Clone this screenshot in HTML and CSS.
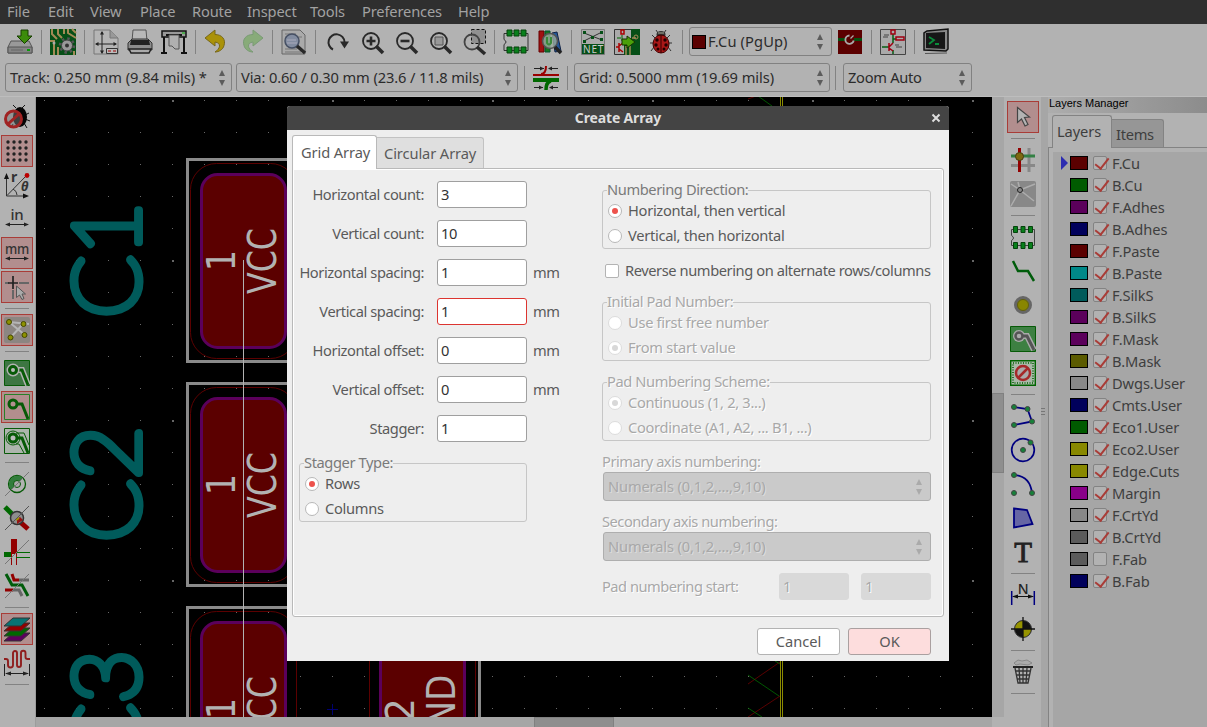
FILE: index.html
```html
<!DOCTYPE html>
<html lang="en">
<head>
<meta charset="utf-8">
<title>Create Array</title>
<link rel="stylesheet" href="styles.css">
</head>
<body>
<nav class="menubar"><span class="m1">File</span><span class="m2">Edit</span><span class="m3">View</span><span class="m4">Place</span><span class="m5">Route</span><span class="m6">Inspect</span><span class="m7">Tools</span><span class="m8">Preferences</span><span class="m9">Help</span></nav>

<div class="toolbar main-tools">
  <div class="btn"><svg viewBox="0 0 26 26"><path d="M4 12h18l3 6v6H1v-6z" fill="#999" stroke="#555"/><path d="M1 18h24v6H1z" fill="#858585" stroke="#555"/><path d="M4 21h12" stroke="#666"/><path d="M20 20h3v2h-3z" fill="#0a9a0a"/><path d="M14 1h7v6h4l-7.500 7.500L10 7h4z" fill="#3c8c0b" stroke="#163c00"/></svg></div>
  <i class="sep"></i>
  <div class="btn"><svg viewBox="0 0 26 26"><path d="M0 0h26v26H0z" fill="#064f17"/><path d="M2 0v5l5 5M8 0v5l4 4M14 0v5M0 12h4v14M8 26v-8M18 0v4l8 5M22 0l4 4M24 22v4" stroke="#a38a55" stroke-width="2" fill="none"/><circle cx="4" cy="14" r="1.500" fill="#aaa"/><circle cx="17" cy="16.500" r="5.500" fill="#999" stroke="#444"/><circle cx="17" cy="16.500" r="7" fill="none" stroke="#555" stroke-width="2.500" stroke-dasharray="2.500 3"/><circle cx="17" cy="16.500" r="2" fill="#333"/></svg></div>
  <i class="sep"></i>
  <div class="btn"><svg viewBox="0 0 26 26"><path d="M1 1h16l8 8v16H1z" fill="#b5b5b5" stroke="#777"/><path d="M17 1v8h8" fill="#999" stroke="#777"/><path d="M9 3v21M3 15h20" stroke="#222"/><path d="M9 2l2 3.500H7zM9 25l2-3.500H7zM2 15l3.500-2v4zM24 15l-3.500-2v4z" fill="#222"/><path d="M13.500 19.500h11v5h-11z" fill="#bbb" stroke="#333"/><path d="M15 22h3m2 0h3" stroke="#900"/></svg></div>
  <div class="btn"><svg viewBox="0 0 26 26"><path d="M6 1h13l1 11H5z" fill="#b8b8b8" stroke="#555"/><path d="M1 14l4-4h16l4 4v7H1z" fill="#8c8c8c" stroke="#333"/><path d="M4 11h18l1 5H3z" fill="#222"/><path d="M2 20h22l-2 4H4z" fill="#aaa" stroke="#222" stroke-width="1.500"/></svg></div>
  <div class="btn"><svg viewBox="0 0 26 26"><path d="M1 2h24v6H1z" fill="#999" stroke="#111" stroke-width="1.500"/><path d="M5 6h16" stroke="#111" stroke-width="2"/><path d="M3 8v16M23 8v16M0 24h6m14 0h6" stroke="#111" stroke-width="2"/><path d="M8 6h10v14h-4l-3-3H8z" fill="#b0b0b0" stroke="#555"/><path d="M21 4h3" stroke="#0b0"/></svg></div>
  <i class="sep"></i>
  <div class="btn"><svg viewBox="0 0 26 26"><path d="M1 9l10-8v4.500c7 0 11 5 9 11-1 4-5 6.500-9 6.500 5-3 7-9 0-10v4z" fill="#aa9209" stroke="#776719"/></svg></div>
  <div class="btn faded"><svg viewBox="0 0 26 26"><path d="M25 9L15 1v4.500C8 5.500 4 10.500 6 16.500c1 4 5 6.500 9 6.500-5-3-7-9 0-10v4z" fill="#72a85c" stroke="#5c8e55"/></svg></div>
  <i class="sep"></i>
  <div class="btn"><svg viewBox="0 0 26 26"><path d="M1 1h18l5 5v19H1z" fill="#aaa" stroke="#666"/><path d="M4 5h11M4 8h17M4 20h12M4 23h16" stroke="#777"/><circle cx="11" cy="12" r="7" fill="#828ca0" stroke="#465064" stroke-width="1.500"/><path d="M6 11h9M6 14h10" stroke="#aab"/><path d="M16 17l8 7" stroke="#292929" stroke-width="3.500"/></svg></div>
  <i class="sep"></i>
  <div class="btn"><svg viewBox="0 0 26 26"><path d="M9 20.500A8 8 0 1 1 20.500 13" fill="none" stroke="#292929" stroke-width="2"/><path d="M16 12.500h9l-4.500 7z" fill="#292929"/></svg></div>
  <div class="btn"><svg viewBox="0 0 26 26"><circle cx="13" cy="12" r="8" fill="none" stroke="#292929" stroke-width="1.800"/><path d="M18 17l7 7" stroke="#292929" stroke-width="3.500"/><path d="M8.500 12h9M13 7.500v9" stroke="#292929" stroke-width="2.600"/></svg></div>
  <div class="btn"><svg viewBox="0 0 26 26"><circle cx="13" cy="12" r="8" fill="none" stroke="#292929" stroke-width="1.800"/><path d="M18 17l7 7" stroke="#292929" stroke-width="3.500"/><path d="M8.500 12h9" stroke="#292929" stroke-width="2.600"/></svg></div>
  <div class="btn"><svg viewBox="0 0 26 26"><circle cx="13" cy="12" r="8" fill="none" stroke="#292929" stroke-width="1.800"/><path d="M18 17l7 7" stroke="#292929" stroke-width="3.500"/><path d="M9 8h8v8H9z" fill="#999" stroke="#555"/></svg></div>
  <div class="btn"><svg viewBox="0 0 26 26"><path d="M11.500 .5h14v14h-14z" fill="#909090" stroke="#111" stroke-dasharray="3 2"/><circle cx="12" cy="13" r="7.500" fill="none" stroke="#444" stroke-width="1.800"/><path d="M17 18l8 7" stroke="#292929" stroke-width="3.500"/></svg></div>
  <i class="sep"></i>
  <div class="btn"><svg viewBox="0 0 26 26"><path d="M1 4.500h24v17H1v-6q4-2.500 0-5z" fill="none" stroke="#333"/><path d="M4 1h5v6H4zM11 1h5v6h-5zM18 1h5v6h-5zM4 18h5v6H4zM11 18h5v6h-5zM18 18h5v6h-5z" fill="#08801b" stroke="#06430c"/></svg></div>
  <div class="btn"><svg viewBox="0 0 26 26"><path d="M2 2h5v21H2z" fill="#a01212" stroke="#600"/><path d="M8 2h5v21H8z" fill="#17751e" stroke="#053"/><path d="M15 4l5-1 4 19-6 1z" fill="#255899" stroke="#124"/><circle cx="13" cy="12" r="7.500" fill="#9bab9c" fill-opacity=".8" stroke="#555" stroke-width="1.500"/><path d="M10 8v6q2 3 4 0V8" fill="none" stroke="#3a8a3a" stroke-width="2"/><path d="M18 18l6 6" stroke="#222" stroke-width="3.500"/></svg></div>
  <i class="sep"></i>
  <div class="btn"><svg viewBox="0 0 26 26"><path d="M1.500 .5h23v25h-23z" fill="#aaa" stroke="#777"/><path d="M4 4l18 7M4 12l18-9" stroke="#333"/><path d="M3 2h3v3H3zM20 2h3v3h-3zM3 11h3v3H3zM20 9h3v3h-3zM11 7h3v3h-3z" fill="#064f17"/><path d="M2 15h22v10H2z" fill="#064f17"/><text x="13" y="23.500" font-family="Noto Sans" font-size="10" textLength="20" text-anchor="middle" fill="#ccc">NET</text></svg></div>
  <div class="btn"><svg viewBox="0 0 26 26"><path d="M.5.500h18v25H.5z" fill="#aaa" stroke="#333"/><path d="M17 0h9v26H10V15h7z" fill="#064f17"/><path d="M12 17v9M16 17v9M18 9h4" stroke="#a38a55" stroke-width="1.500"/><circle cx="22" cy="8" r="2" fill="none" stroke="#a38a55"/><path d="M7 1h3v4H7zM2 18h3m0-4v9m0-6l4-3m-4 6l4 3" fill="none" stroke="#a00" stroke-width="1.500"/><path d="M3 9h4m1-3v6" stroke="#060"/><path d="M8 10h5V7l8 6-8 6v-3H8z" fill="#4aa00a" stroke="#173400"/></svg></div>
  <div class="btn"><svg viewBox="0 0 26 26"><path d="M7 9L4 6M6 14H2m4 4l-3 4m16-13l3-3m-2 8h4m-4 4l3 4M10 4L8 1m8 3l2-3" stroke="#333"/><ellipse cx="13" cy="5.500" rx="4.500" ry="3.500" fill="#333"/><path d="M10 4h6" stroke="#aa9" /><ellipse cx="13" cy="15" rx="8" ry="9" fill="#a91717" stroke="#400"/><path d="M13 6v18" stroke="#300"/><g fill="#200"><circle cx="9" cy="11" r="1.700"/><circle cx="17" cy="11" r="1.700"/><circle cx="8" cy="16" r="1.700"/><circle cx="18" cy="16" r="1.700"/><circle cx="10" cy="20" r="1.500"/><circle cx="16" cy="20" r="1.500"/></g></svg></div>
  <i class="sep"></i>
  <div class="combo layer"><b class="swatch c-red"></b><span>F.Cu (PgUp)</span><em></em></div>
  <div class="btn"><svg viewBox="0 0 26 26"><path d="M1 1h24v24H1z" fill="#5b0000"/><path d="M1 10.500h7m9 0h8" stroke="#064f10" stroke-width="3"/><path d="M12.500 6.500a4.200 4.200 0 1 0 4.200 5" fill="none" stroke="#aaa" stroke-width="1.800"/><path d="M13.500 9.500l3-3" stroke="#aaa" stroke-width="1.200"/></svg></div>
  <i class="sep"></i>
  <div class="btn"><svg viewBox="0 0 26 26"><path d="M.5.500h25v25H.5z" fill="#aaa" stroke="#444"/><path d="M13 5v9M13 10h3M2 18h7M13 21v4" stroke="#075d15" stroke-width="1.500"/><path d="M11 1h4v4h-4zM16 8h8v3h-8zM9 14v8m0-4l4-4m-4 5l4 3" fill="none" stroke="#a00012" stroke-width="1.500"/><path d="M4 6h5M3 8h5m7 8h4m-3 2h6" stroke="#444"/></svg></div>
  <i class="sep"></i>
  <div class="btn"><svg viewBox="0 0 26 26"><path d="M4 2l21-2v20l-2 2-22-1V4z" fill="#888" stroke="#111" stroke-width="1.500"/><path d="M3 4l19-1v17L3 19z" fill="#161616"/><path d="M6 8l5 3-5 4M12 15h4" stroke="#0a8b3a" stroke-width="1.800" fill="none"/><path d="M2 24.500l22-.5" stroke="#555"/></svg></div>
</div>

<div class="toolbar option-tools">
  <div class="combo track"><span>Track: 0.250 mm (9.84 mils) *</span><em></em></div>
  <div class="combo via"><span>Via: 0.60 / 0.30 mm (23.6 / 11.8 mils)</span><em></em></div>
  <i class="sep"></i>
  <div class="btn"><svg viewBox="0 0 26 26"><path d="M0 10h26" stroke="#9b0000" stroke-width="2"/><path d="M8 9q5 0 5-8" fill="none" stroke="#9b0000" stroke-width="2"/><path d="M0 15h26" stroke="#006800" stroke-width="4"/><path d="M18 16q-5 1-5 9" fill="none" stroke="#006800" stroke-width="3.500"/><path d="M1 3.500h10M16 3.500h9M1 22.500h9M17 22.500h8" stroke="#222"/><path d="M11 3.500L7 1.500v4zM15 3.500l4-2v4zM10 22.500l-4-2v4zM16 22.500l4-2v4z" fill="#222"/></svg></div>
  <i class="sep"></i>
  <div class="combo grid"><span>Grid: 0.5000 mm (19.69 mils)</span><em></em></div>
  <i class="sep"></i>
  <div class="combo zoom"><span>Zoom Auto</span><em></em></div>
</div>

<main class="work">
  <aside class="side left">
    <div class="btn"><svg viewBox="0 0 26 26"><path d="M12 4L9 1m9 3l3-3m0 10l4-2m-4 6l5 2m-6 2l3 5M9 20l-2 4" stroke="#111"/><ellipse cx="16" cy="13" rx="7" ry="10" fill="#050505"/><circle cx="9.500" cy="15" r="8" fill="#777" fill-opacity=".5" stroke="#a02323" stroke-width="3"/><path d="M4 20L15 10" stroke="#a02323" stroke-width="3"/></svg></div>
    <div class="btn on"><svg viewBox="0 0 26 26"><path d="M4 4h.01M10 4h.01M16 4h.01M22 4h.01M4 10h.01M10 10h.01M16 10h.01M22 10h.01M4 16h.01M10 16h.01M16 16h.01M22 16h.01M4 22h.01M10 22h.01M16 22h.01M22 22h.01" stroke="#222" stroke-width="3.400" stroke-linecap="round"/></svg></div>
    <div class="btn"><svg viewBox="0 0 26 26"><path d="M2.500 3v21H23M3 23.500L22 4M9 17q4 2 4 6" fill="none" stroke="#333"/><path d="M2.500 1l2.500 6H0zM25 24l-6-2.500v5z" fill="#111"/><circle cx="23" cy="3.500" r="2.400" fill="#b00"/><text x="7" y="10" font-family="Noto Sans" font-weight="bold" font-size="14" fill="#333">r</text><text x="17" y="19" font-family="Noto Sans" font-weight="bold" font-style="italic" font-size="13" fill="#333">θ</text></svg></div>
    <div class="btn"><svg viewBox="0 0 26 26"><text x="13" y="13.500" text-anchor="middle" font-family="Noto Sans" font-weight="500" font-size="15" fill="#333">in</text><path d="M2 18.500h22" stroke="#222"/><path d="M1 18.500l5-2v4zM25 18.500l-5-2v4z" fill="#222"/></svg></div>
    <div class="btn on"><svg viewBox="0 0 26 26"><text x="13" y="14" text-anchor="middle" font-family="Noto Sans" font-weight="500" font-size="15" textLength="24" lengthAdjust="spacingAndGlyphs" fill="#333">mm</text><path d="M2 18.500h22" stroke="#222"/><path d="M1 18.500l5-2v4zM25 18.500l-5-2v4z" fill="#222"/></svg></div>
    <div class="btn on"><svg viewBox="0 0 26 26"><path d="M1 9h4M15 9h10M9 16v9" stroke="#666" stroke-width="2"/><path d="M9 2v13M4 9h10" stroke="#222" stroke-width="1.700"/><path d="M12.500 12v11.500l3-2.500 2.500 4.500 2-1-2-4.500h3.500z" fill="#aaa" stroke="#555"/></svg></div>
    <i class="sep"></i>
    <div class="btn on"><svg viewBox="0 0 26 26"><rect width="26" height="26" rx="2" fill="#8c8682"/><path d="M5 5l20 2M5 5l16 13M19 7L7 20" stroke="#b5b5b5" stroke-width="2"/><g fill="#8d9200" stroke="#454700"><circle cx="5" cy="5" r="2.500"/><circle cx="19.500" cy="7" r="2.500"/><circle cx="20.500" cy="18" r="2.500"/><circle cx="6.500" cy="20.500" r="2.500"/></g></svg></div>
    <i class="sep"></i>
    <div class="btn clip"><svg viewBox="0 0 26 26"><path d="M.5.500h25v25H.5z" fill="#3d7642" stroke="#075a07"/><path d="M9 10h9l6 15" stroke="#b2b2b2" stroke-width="6" fill="none"/><path d="M9 10h9l6 15" stroke="#075a07" stroke-width="3" fill="none"/><circle cx="9" cy="10" r="5" fill="#bbb" stroke="#b2b2b2" stroke-width="3"/><circle cx="9" cy="10" r="3.500" fill="#bbb" stroke="#075a07" stroke-width="3"/></svg></div>
    <div class="btn on"><svg viewBox="0 0 26 26"><path d="M.5.500h25v25H.5z" fill="none" stroke="#278027"/><path d="M9 10h9l6 15" stroke="#075a07" stroke-width="3" fill="none"/><circle cx="9" cy="10" r="4" fill="#b49090" stroke="#075a07" stroke-width="3"/></svg></div>
    <div class="btn"><svg viewBox="0 0 26 26"><path d="M.5.500h25v25H.5z" fill="#adb5ad" stroke="#075a07"/><circle cx="9" cy="10" r="7" fill="none" stroke="#075a07"/><path d="M12 5h8l5 12M12 16h3l5 9" stroke="#075a07" fill="none"/><path d="M9 10h9l6 15" stroke="#075a07" stroke-width="3" fill="none"/><circle cx="9" cy="10" r="4" fill="#bbb" stroke="#075a07" stroke-width="3"/></svg></div>
    <i class="sep"></i>
    <div class="btn"><svg viewBox="0 0 26 26"><circle cx="13" cy="13" r="8.500" fill="#b2b2b2" stroke="#075a07" stroke-width="1.300"/><path d="M7 19A8.500 8.500 0 0 1 19 7z" fill="#317c3b"/><circle cx="13" cy="13" r="3.500" fill="#aaa" stroke="#075a07"/><path d="M1 25L25 1" stroke="#777"/></svg></div>
    <div class="btn"><svg viewBox="0 0 26 26"><path d="M1 2l9 9" stroke="#006800" stroke-width="5"/><path d="M15 16l9 8" stroke="#930000" stroke-width="5"/><circle cx="13" cy="13" r="6.500" fill="#8d8d8d" stroke="#333" stroke-width="1.500"/><path d="M13 19v-5l3-2 3 3z" fill="#941313"/><path d="M12 15l3-2" stroke="#a39500" stroke-width="2"/><path d="M1 25L25 1" stroke="#555"/></svg></div>
    <div class="btn"><svg viewBox="0 0 26 26"><path d="M0 15.500h8" stroke="#006800" stroke-width="5"/><path d="M10 0v15" stroke="#930000" stroke-width="6"/><path d="M7.500 15v11M12.500 15v11" stroke="#930000"/><path d="M12 13.500h14M12 18.500h14" stroke="#006800"/><path d="M1 25L25 1" stroke="#777"/></svg></div>
    <div class="btn"><svg viewBox="0 0 26 26" fill="none" stroke-width="3"><path d="M8 1l2 6h5" stroke="#930000"/><path d="M15 7h10" stroke="#666"/><path d="M1 17h8" stroke="#930000"/><path d="M9 17h6l3 6" stroke="#666"/><path d="M2 1l6 11h10l6 11" stroke="#005c0b"/><path d="M1 25L25 1" stroke="#777" stroke-width="1"/></svg></div>
    <i class="sep"></i>
    <div class="btn on"><svg viewBox="0 0 26 26" stroke="#333"><path d="M9 17h17l-9 8H0z" fill="#5d005d"/><path d="M9 12h17l-9 8H0z" fill="#006800"/><path d="M9 7h17l-9 8H0z" fill="#930000"/><path d="M9 2h17l-9 8H0z" fill="#087373"/></svg></div>
    <div class="btn"><svg viewBox="0 0 26 26"><path d="M0 9h2q2 0 2 2v4a2.500 2.500 0 0 0 5 0V3a2 2 0 0 1 4 0v12a2 2 0 0 0 4 0V3a2.200 2.200 0 0 1 4.500 0v4q0 2 2 2H26" fill="none" stroke="#8f1e1e" stroke-width="1.900"/><path d="M.5 14v12m25-12v12M2 23.500h22" stroke="#222"/><path d="M1 23.500l6-2v4zM25 23.500l-6-2v4z" fill="#222"/></svg></div>
    <i class="sep"></i>
  </aside>

  <div class="canvas-col">
  <svg class="board" viewBox="36 97 956 620">
    <defs>
      <pattern id="dots" x="44" y="100" width="32" height="32" patternUnits="userSpaceOnUse"><path d="M0 0h1v1H0z" fill="#686868"/></pattern>
      <pattern id="major" x="172" y="100" width="160" height="160" patternUnits="userSpaceOnUse"><path d="M0 0h2v2H0z" fill="#666"/></pattern>
      <g id="pad"><rect x="201.500" y="174.500" width="84" height="173" rx="16" fill="#5b0000" stroke="#5b005b" stroke-width="3"/><rect x="190.500" y="163.500" width="106" height="195" rx="26" fill="none" stroke="#5b0000"/></g>
      <g id="part"><rect x="187.500" y="159.500" width="292" height="202" fill="none" stroke="#8a8a8a" stroke-width="3"/><use href="#pad"/><use href="#pad" x="179"/>
        <g class="padtext"><text transform="translate(235 271) rotate(-90)" textLength="21" lengthAdjust="spacingAndGlyphs">1</text><text transform="translate(276 294) rotate(-90)" textLength="66" lengthAdjust="spacingAndGlyphs">VCC</text><text transform="translate(414 274) rotate(-90)" textLength="24" lengthAdjust="spacingAndGlyphs">2</text><text transform="translate(455 304) rotate(-90)" textLength="77" lengthAdjust="spacingAndGlyphs">GND</text></g></g>
    </defs>
    <path d="M36 97h956v620H36z"/>
    <path d="M36 97h956v620H36z" fill="url(#dots)"/>
    <path d="M36 97h956v620H36z" fill="url(#major)"/>
    <g class="reftext"><text transform="translate(138.500 318) rotate(-90)" textLength="116" lengthAdjust="spacingAndGlyphs">C1</text><text transform="translate(138.500 542) rotate(-90)" textLength="116" lengthAdjust="spacingAndGlyphs">C2</text><text transform="translate(138.500 766) rotate(-90)" textLength="116" lengthAdjust="spacingAndGlyphs">C3</text></g>
    <use href="#part"/><use href="#part" y="224"/><use href="#part" y="448"/>
    <path d="M243.500 260v457" stroke="#b2b2b2"/>
    <path d="M332.500 704v11M327 709.500h11" stroke="#000070"/>
    <path d="M780.500 97v620M782.500 97v620" stroke="#8b8b00"/>
    <path d="M748 684l32-22M748 717l32-21M748 99l8-3" stroke="#700000" stroke-width=".8"/>
    <path d="M748 675l31 21M748 708l14 9M758 96l14 10M775 661l5 3" stroke="#006c00" stroke-width=".8"/>
  </svg>
  <div class="hscroll"><b></b></div>
  </div>
  <div class="vscroll"><b></b></div>

  <aside class="side right">
    <div class="btn on"><svg viewBox="0 0 26 26"><path d="M7.500 3.500v15l4-3.500 3.500 7 3-1.500-3.500-7 5-.5z" fill="#b3b3b3" stroke="#444" stroke-width="1.200"/></svg></div>
    <i class="sep"></i>
    <div class="btn"><svg viewBox="0 0 26 26"><path d="M1 18.500h24M19 1v24" stroke="#888" stroke-width="3"/><path d="M1 9h24" stroke="#338044" stroke-width="3"/><path d="M9.500 1v24" stroke="#930000" stroke-width="3"/><circle cx="9.500" cy="9.500" r="4" fill="#7d6810" stroke="#493c10"/></svg></div>
    <div class="btn"><svg viewBox="0 0 26 26"><rect width="26" height="26" rx="2" fill="#888"/><path d="M10 9L1 3M10 9l-2-8M10 9l15-6M10 9l14 11M10 9L1 25" stroke="#adadad" stroke-width="1.500"/><circle cx="10" cy="9" r="2.500" fill="#888" stroke="#222"/></svg></div>
    <i class="sep"></i>
    <div class="btn"><svg viewBox="0 0 26 26"><path d="M1.500 5.500h23v16h-23v-5q4-2.500 0-5z" fill="none" stroke="#444"/><path d="M3.500 2.500h4v6h-4zM11 2.500h4v6h-4zM18.500 2.500h4v6h-4zM3.500 18.500h4v6h-4zM11 18.500h4v6h-4zM18.500 18.500h4v6h-4z" fill="#08801b" stroke="#06430c"/></svg></div>
    <div class="btn"><svg viewBox="0 0 26 26"><path d="M3 3l5 10h10l6 10" fill="none" stroke="#005c0b" stroke-width="2.500"/></svg></div>
    <div class="btn"><svg viewBox="0 0 26 26"><circle cx="13" cy="13" r="7.500" fill="#898600" stroke="#666" stroke-width="3"/><circle cx="13" cy="13" r="5.500" fill="none" stroke="#4d4c1c" stroke-width=".7"/></svg></div>
    <div class="btn clip"><svg viewBox="0 0 26 26"><path d="M.5.500h25v25H.5z" fill="#3d8042" stroke="#075a07"/><path d="M9 10h8l7 14" stroke="#aaa" stroke-width="6" fill="none"/><circle cx="9" cy="10" r="6" fill="#aaa"/><path d="M9 10h8l7 14" stroke="#555" stroke-width="3" fill="none"/><circle cx="9" cy="10" r="3.500" fill="#aaa" stroke="#555" stroke-width="2.500"/></svg></div>
    <div class="btn"><svg viewBox="0 0 26 26"><path d="M.7.700h24.600v24.600H.7z" fill="#a9b8a9" stroke="#006400" stroke-width="1.400"/><path d="M3 3h20v20H3z" fill="none" stroke="#287728" stroke-width="2" stroke-dasharray="1 1.500"/><circle cx="13" cy="13" r="7" fill="#aaa" stroke="#a52929" stroke-width="2.500"/><path d="M8 18L18 8" stroke="#a52929" stroke-width="2.500"/></svg></div>
    <i class="sep"></i>
    <div class="btn"><svg viewBox="0 0 26 26"><path d="M4 4l13.500 2L22 18.500 4 22" fill="none" stroke="#000080" stroke-width="1.800"/><g fill="#168039" stroke="#444"><circle cx="4" cy="4" r="2.500"/><circle cx="17.500" cy="6" r="2.500"/><circle cx="22" cy="18.500" r="2.500"/><circle cx="4" cy="22" r="2.500"/></g></svg></div>
    <div class="btn"><svg viewBox="0 0 26 26"><circle cx="13" cy="13" r="11.300" fill="none" stroke="#000080" stroke-width="1.700"/><g fill="#168039" stroke="#444"><circle cx="13" cy="13" r="2.500"/><circle cx="20.500" cy="5.500" r="2.500"/></g></svg></div>
    <div class="btn"><svg viewBox="0 0 26 26"><path d="M4 4q16 1 18 18" fill="none" stroke="#000080" stroke-width="1.800"/><g fill="#168039" stroke="#444"><circle cx="4" cy="4" r="2.500"/><circle cx="22" cy="22" r="2.500"/><circle cx="4" cy="22" r="2.500"/></g></svg></div>
    <div class="btn"><svg viewBox="0 0 26 26"><path d="M4 3.500l13 1.500 5.500 14L4 22.500z" fill="#6666a4" stroke="#000080" stroke-width="1.800"/></svg></div>
    <div class="btn"><svg viewBox="0 0 26 26"><text x="13" y="22.500" text-anchor="middle" font-family="Liberation Serif" font-size="29" fill="#222" stroke="#222" stroke-width=".9">T</text></svg></div>
    <i class="sep"></i>
    <div class="btn"><svg viewBox="0 0 26 26"><text x="13" y="11.500" text-anchor="middle" font-family="Noto Sans" font-size="14" font-weight="500" fill="#222">N</text><path d="M1.700 9v14m22.600-14v14" stroke="#000080" stroke-width="1.500"/><path d="M3 14.500h20" stroke="#111"/><path d="M2 14.500l6-2v4zM24 14.500l-6-2v4z" fill="#111"/></svg></div>
    <div class="btn"><svg viewBox="0 0 26 26"><circle cx="13" cy="13" r="8.500" fill="#111" stroke="#333"/><path d="M13 13V5a8 8 0 0 0-8 8zM13 13v8a8 8 0 0 0 8-8z" fill="#969300"/><path d="M1 13h24M13 1v24" stroke="#111" stroke-width="1.300"/></svg></div>
    <i class="sep"></i>
    <div class="btn"><svg viewBox="0 0 26 26"><path d="M4 4l4-3 4 1 5-1 5 3-4 2-8-1-4 1z" fill="#aaa" stroke="#888"/><path d="M3 8h20" stroke="#222" stroke-width="2"/><path d="M5 9l3 15h10l3-15M9 9l1 15m3-15v15m4-15l-1 15M5 12h15M6 16h14M7 20h12" fill="none" stroke="#333" stroke-width="1.300"/></svg></div>
    <i class="sep"></i>
  </aside>

  <div class="sash"><i></i></div>
  <section class="layers">
    <h2>Layers Manager</h2>
    <div class="ltabs"><span class="active">Layers</span><span>Items</span></div>
    <ul class="lpage">
      <li class="current"><b class="c-red"></b><i class="ck on"></i>F.Cu</li>
      <li><b class="c-green"></b><i class="ck on"></i>B.Cu</li>
      <li><b class="c-purple"></b><i class="ck on"></i>F.Adhes</li>
      <li><b class="c-navy"></b><i class="ck on"></i>B.Adhes</li>
      <li><b class="c-red"></b><i class="ck on"></i>F.Paste</li>
      <li><b class="c-cyan"></b><i class="ck on"></i>B.Paste</li>
      <li><b class="c-teal"></b><i class="ck on"></i>F.SilkS</li>
      <li><b class="c-purple"></b><i class="ck on"></i>B.SilkS</li>
      <li><b class="c-purple"></b><i class="ck on"></i>F.Mask</li>
      <li><b class="c-olive"></b><i class="ck on"></i>B.Mask</li>
      <li><b class="c-gray"></b><i class="ck on"></i>Dwgs.User</li>
      <li><b class="c-navy"></b><i class="ck on"></i>Cmts.User</li>
      <li><b class="c-green"></b><i class="ck on"></i>Eco1.User</li>
      <li><b class="c-yellow"></b><i class="ck on"></i>Eco2.User</li>
      <li><b class="c-yellow"></b><i class="ck on"></i>Edge.Cuts</li>
      <li><b class="c-magenta"></b><i class="ck on"></i>Margin</li>
      <li><b class="c-gray"></b><i class="ck on"></i>F.CrtYd</li>
      <li><b class="c-dark"></b><i class="ck on"></i>B.CrtYd</li>
      <li><b class="c-dark"></b><i class="ck"></i>F.Fab</li>
      <li><b class="c-navy"></b><i class="ck on"></i>B.Fab</li>
    </ul>
  </section>
</main>

<div class="dialog">
  <header><span>Create Array</span><svg viewBox="0 0 10 10"><path d="M1.500 1.500l7 7m0-7l-7 7" stroke="#ddd" stroke-width="2"/></svg></header>
  <div class="tabs"><span class="active">Grid Array</span><span>Circular Array</span></div>
  <div class="page">
    <div class="col-left">
      <div class="field"><label>Horizontal count:</label><div class="input">3</div></div>
      <div class="field"><label>Vertical count:</label><div class="input">10</div></div>
      <div class="field"><label>Horizontal spacing:</label><div class="input">1</div><span>mm</span></div>
      <div class="field"><label>Vertical spacing:</label><div class="input focus">1</div><span>mm</span></div>
      <div class="field"><label>Horizontal offset:</label><div class="input">0</div><span>mm</span></div>
      <div class="field"><label>Vertical offset:</label><div class="input">0</div><span>mm</span></div>
      <div class="field"><label>Stagger:</label><div class="input">1</div></div>
      <fieldset class="stagger"><legend>Stagger Type:</legend><div class="radio on"><i></i>Rows</div><div class="radio"><i></i>Columns</div></fieldset>
    </div>
    <div class="col-right">
      <fieldset><legend>Numbering Direction:</legend><div class="radio on"><i></i>Horizontal, then vertical</div><div class="radio"><i></i>Vertical, then horizontal</div></fieldset>
      <div class="check"><i></i><span>Reverse numbering on alternate rows/columns</span></div>
      <fieldset class="off"><legend>Initial Pad Number:</legend><div class="radio"><i></i>Use first free number</div><div class="radio on"><i></i>From start value</div></fieldset>
      <fieldset class="off last"><legend>Pad Numbering Scheme:</legend><div class="radio on"><i></i>Continuous (1, 2, 3...)</div><div class="radio"><i></i>Coordinate (A1, A2, ... B1, ...)</div></fieldset>
      <div class="axis off">Primary axis numbering:</div>
      <div class="combo dis off"><span>Numerals (0,1,2,...,9,10)</span><em></em></div>
      <div class="axis off">Secondary axis numbering:</div>
      <div class="combo dis off"><span>Numerals (0,1,2,...,9,10)</span><em></em></div>
      <div class="start off"><span>Pad numbering start:</span><div class="input">1</div><div class="input">1</div></div>
    </div>
  </div>
  <footer><div class="button">Cancel</div><div class="button ok">OK</div></footer>
</div>
</body>
</html>
```

FILE: styles.css
```css
* { box-sizing: border-box; }
body { margin: 0; width: 1207px; height: 727px; overflow: hidden; position: relative; display: flex; flex-direction: column; background: #b2b2b2; color: #2b2b2b; font: 14.67px/18px "Noto Sans", sans-serif; letter-spacing: -0.3px; white-space: nowrap; }
i, em { font-style: normal; }
ul, h2, fieldset { margin: 0; padding: 0; }

.menubar { height: 24px; flex: none; background: #2f2f2f; color: #a2a2a2; display: flex; padding: 2px 0 0 7px; letter-spacing: -.15px; }
.m1 { width: 41px; } .m2 { width: 42px; } .m3 { width: 50px; } .m4 { width: 52px; } .m5 { width: 55px; } .m6 { width: 63px; } .m7 { width: 52px; } .m8 { width: 96px; }

.toolbar { display: flex; gap: 2px; padding-left: 4px; align-items: center; flex: none; }
.main-tools { height: 35px; }
.option-tools { height: 38px; border-bottom: 1px solid #bdbdbd; padding-left: 5px; }
.btn { width: 32px; height: 32px; flex: none; display: flex; align-items: center; justify-content: center; }
.btn svg { width: 26px; height: 26px; display: block; overflow: visible; }
.btn.clip svg { overflow: hidden; }
.btn.on { background: #b28e8e; border: 1px solid #a93c37; }
.faded { opacity: .65; }
.toolbar .sep { width: 1px; height: 24px; margin: 0 3px; background: #828282; flex: none; }
.side .sep { width: 24px; height: 1px; margin: 3px 0 3px 4px; background: #828282; flex: none; }

.combo { display: flex; align-items: center; height: 29px; border: 1px solid #818181; border-radius: 3px; padding: 0 6px 0 5px; flex: none; }
.combo span { flex: 1; height: 20px; }
.combo em { width: 6px; height: 16px; display: flex; flex-direction: column; justify-content: space-between; }
.combo em::before, .combo em::after { content: ""; border: 3px solid transparent; border-top: 0; border-bottom: 6px solid #5c5c5c; }
.combo em::after { border-bottom: 0; border-top: 6px solid #5c5c5c; }
.layer { width: 143px; margin-left: 1px; padding: 0 8px 0 2px; letter-spacing: .1px; }
.layer .swatch { width: 14px; height: 14px; border: 1px solid #000; margin-right: 2px; }
.track { width: 227px; margin-right: 2px; padding-left: 4px; letter-spacing: -.05px; }
.via { width: 282px; margin-right: 1px; padding-left: 4px; letter-spacing: -.12px; }
.grid { width: 256px; margin: 0 0 0 1px; padding-left: 4px; letter-spacing: -.05px; }
.zoom { width: 129px; margin-left: 2px; padding-left: 4px; }

.work { display: flex; flex: 1; }
.side { display: flex; flex-direction: column; gap: 2px; padding-top: 4px; }
.left { width: 36px; padding-left: 1px; border-right: 1px solid #9c9c9c; }
.right { width: 36px; margin-left: 1px; padding-left: 2px; }
.canvas-col { width: 956px; }
.board { display: block; width: 956px; height: 620px; }
.hscroll { height: 10px; background: #a6a6a6; padding-left: 498px; }
.hscroll b { display: block; width: 80px; height: 10px; background: #8e8e8e; border: 1px solid #808080; border-bottom: 0; }
.vscroll { width: 12px; background: #a6a6a6; padding-top: 296px; height: 620px; }
.vscroll b { display: block; width: 12px; height: 80px; background: #8e8e8e; border: 1px solid #808080; }
.reftext { font-family: Lato, "DejaVu Sans", sans-serif; font-weight: 100; font-size: 93px; fill: #005b5b; stroke: #005b5b; stroke-width: 8; stroke-linejoin: round; letter-spacing: 0; }
.padtext { font-family: "DejaVu Sans", sans-serif; font-size: 39px; fill: #b2b2b2; letter-spacing: 0; }

.sash { width: 7px; background: #a6a6a6; display: flex; align-items: center; }
.sash i { width: 4px; height: 8px; background: repeating-linear-gradient(#777 0 1px, transparent 1px 3px); }
.layers { flex: 1; color: #3e3e3e; display: flex; flex-direction: column; }
.layers h2 { height: 16px; font: 11px/13px "Liberation Sans", sans-serif; letter-spacing: 0; color: #000; padding-left: 1px; background: linear-gradient(90deg, #adadad, #8c8c8c); }
.ltabs { height: 35px; display: flex; align-items: flex-end; padding: 2px 0 0 4px; border-bottom: 1px solid #838383; flex: none; }
.ltabs span { height: 28px; width: 52px; border: 1px solid #838383; border-left: 0; border-bottom: 0; background: #969696; border-radius: 0 3px 0 0; padding: 5px 0 0 4px; letter-spacing: -.3px; }
.ltabs .active { height: 33px; width: 60px; margin-bottom: -1px; background: #b2b2b2; border-left: 1px solid #838383; border-radius: 3px 3px 0 0; padding: 6px 0 0 4px; letter-spacing: -.1px; }
.lpage { flex: 1; list-style: none; border-left: 1px solid #838383; background: #a6a6a6; box-shadow: inset 4px 4px #b2b2b2; padding: 4px 0 0 11px; }
.lpage li { height: 22px; display: flex; align-items: center; padding-left: 10px; letter-spacing: -.1px; position: relative; }
.lpage li b { width: 18px; height: 14px; border: 1px solid #000; margin-right: 5px; }
.lpage .current::before { content: ""; position: absolute; left: 1px; top: 4px; border: 7px solid transparent; border-left-color: #2c2cb0; border-right: 0; }
.ck { width: 14px; height: 14px; border: 1px solid #838383; border-radius: 2px; background: #b2b2b2; margin-right: 5px; position: relative; }
.ck.on::after { content: ""; position: absolute; left: 4px; top: -2px; width: 6px; height: 12px; border: solid #a93c37; border-width: 0 2px 2px 0; transform: rotate(38deg); }
.c-red { background: #5b0000; } .c-green { background: #005b00; } .c-purple { background: #5b005b; } .c-navy { background: #00005b; } .c-cyan { background: #008888; } .c-teal { background: #005b5b; } .c-olive { background: #5b5b00; } .c-gray { background: #888; } .c-yellow { background: #888800; } .c-magenta { background: #880088; } .c-dark { background: #5b5b5b; }

.dialog { position: absolute; left: 287px; top: 106px; width: 662px; height: 555px; background: #eee; color: #5a5a5a; border-radius: 3px 3px 0 0; display: flex; flex-direction: column; }
.dialog header { height: 24px; background: #444; color: #ddd; font-weight: bold; font-size: 14px; letter-spacing: -.15px; display: flex; justify-content: center; align-items: center; position: relative; border-radius: 3px 3px 0 0; }
.dialog header svg { position: absolute; right: 8px; top: 7px; width: 10px; height: 10px; }
.tabs { display: flex; align-items: flex-end; height: 38px; padding-left: 5px; letter-spacing: -.1px; }
.tabs span { width: 107px; height: 31px; border: 1px solid #c2c2c2; border-left: 0; border-bottom: 0; background: #dfdfdf; border-radius: 0 3px 0 0; padding: 6px 0 0 7px; }
.tabs .active { position: relative; z-index: 1; width: 85px; height: 34px; margin-bottom: -1px; background: #fff; border: 1px solid #b9b9b9; border-bottom: 0; border-radius: 3px 3px 0 0; padding: 7px 0 0 8px; }
.page { margin: 0 5px; height: 449px; border: 1px solid #b9b9b9; border-radius: 0 3px 3px 3px; box-shadow: inset 1px 1px #fff, inset -1px -1px #fff; display: flex; }
.col-left { width: 270px; padding: 12px 0 0 6px; margin-right: 39px; flex: none; }
.field { display: flex; align-items: center; height: 27px; margin-bottom: 12px; }
.field label { width: 125px; height: 20px; text-align: right; margin-right: 13px; letter-spacing: -.42px; flex: none; }
.field span { margin-left: 6px; height: 20px; letter-spacing: -.5px; }
.input { width: 90px; height: 27px; border: 1px solid #9f9f9f; border-radius: 3px; background: #fff; color: #333; padding: 3px; flex: none; }
.input.focus { border-color: #dc3530; }
fieldset { border: 1px solid #c6c6c6; border-radius: 3px; height: 69px; min-width: 0; padding: 1px 0 0 5px; }
.stagger { width: 228px; margin-top: -1px; }
legend { padding: 0; margin-left: -1px; color: #7a7a7a; height: 20px; letter-spacing: -.4px; }
.radio { display: flex; align-items: flex-start; height: 20px; margin-bottom: 5px; }
.radio i { width: 14px; height: 14px; border: 1px solid #b8b8b8; border-radius: 50%; background: #fff; margin: 3px 6px 0 0; display: flex; align-items: center; justify-content: center; flex: none; }
.radio.on i::after { content: ""; width: 6px; height: 6px; border-radius: 50%; background: #ed524c; }
.col-right { width: 329px; padding-top: 11px; flex: none; }
.check { display: flex; align-items: flex-start; height: 20px; margin: 12px 0 11px 3px; letter-spacing: -.42px; }
.check i { width: 14px; height: 14px; border: 1px solid #b3b3b3; border-radius: 2px; background: #fff; margin: 3px 6px 0 0; flex: none; }
.off, .off legend { color: #a8a8a8; text-shadow: 1px 1px #fff; }
.off + .off.last { margin-top: 11px; }
.off .radio i { border-color: #dcdcdc; }
.off .radio.on i::after { background: #d8d8d8; }
.axis { height: 20px; margin-top: 11px; letter-spacing: -.48px; }
.dis { background: #cacaca; border-color: #aeaeae; margin-left: 1px; padding: 0 8px 0 4px; text-shadow: 1px 1px #ddd; letter-spacing: -.15px; }
.dis em::before { border-bottom-color: #aaa; } .dis em::after { border-top-color: #aaa; }
.start { display: flex; align-items: center; margin-top: 12px; }
.start span { width: 177px; height: 20px; flex: none; letter-spacing: -.5px; }
.start .input { width: 70px; margin-right: 12px; background: #d9d9d9; border-color: #d9d9d9; color: #a8a8a8; }
.dialog footer { display: flex; justify-content: flex-end; gap: 8px; padding: 11px 18px 0 0; }
.button { width: 83px; height: 27px; border: 1px solid #b3b3b3; border-radius: 3px; background: #fff; text-align: center; line-height: 24px; letter-spacing: 0; }
.ok { background: #fddddd; border-color: #aaa0a0; }
```
